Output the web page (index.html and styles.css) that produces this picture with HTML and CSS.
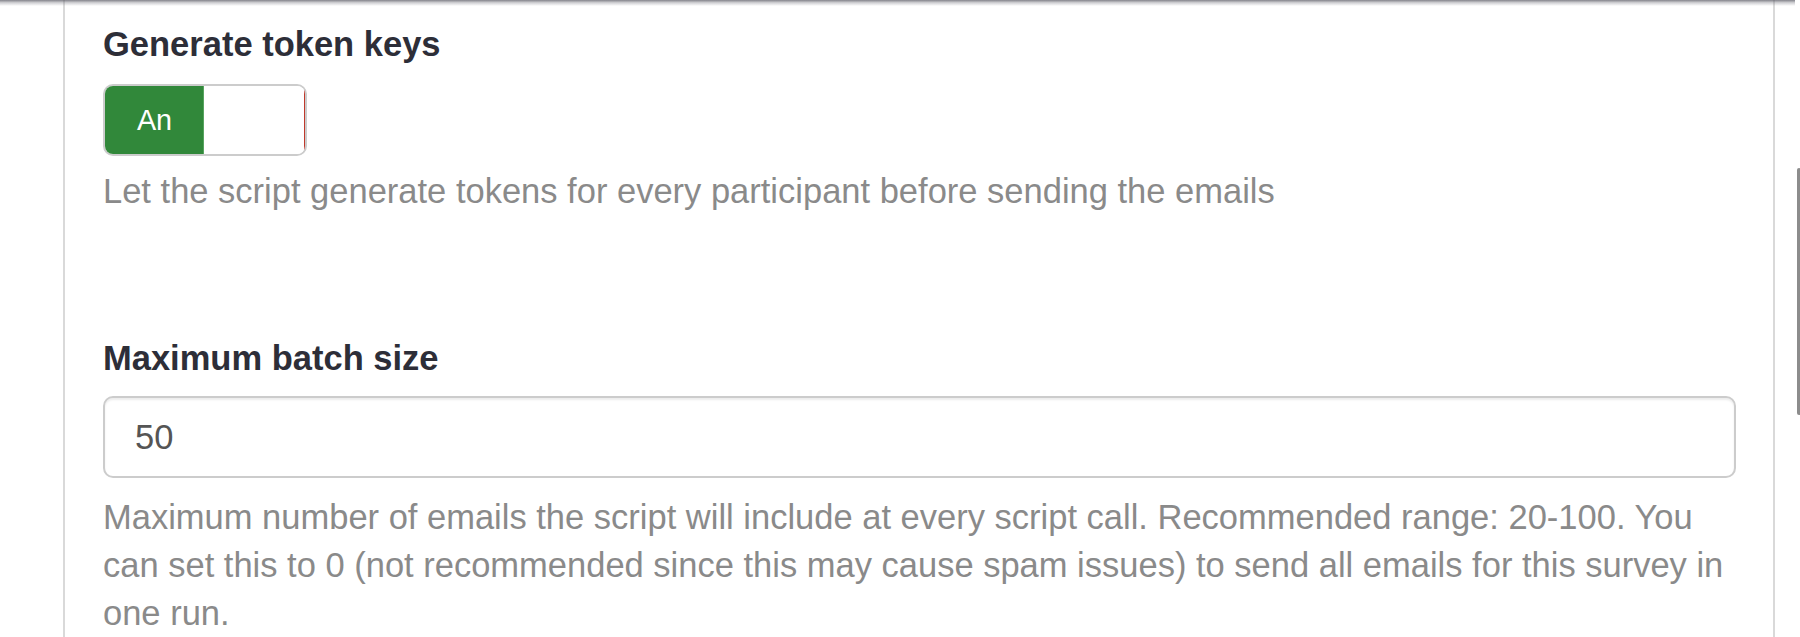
FILE: index.html
```html
<!DOCTYPE html>
<html lang="en">
<head>
<meta charset="utf-8">
<title>Token settings</title>
<link rel="stylesheet" href="styles.css">
</head>
<body>
<div class="top-shadow"></div>
<div class="panel">
  <div class="form-group">
    <div class="field-label">Generate token keys</div>
    <div class="switch">
      <span class="switch-on">An</span>
      <span class="switch-mid"></span>
      <span class="switch-off"></span>
    </div>
    <p class="help help-first">Let the script generate tokens for every participant before sending the emails</p>
  </div>
  <div class="form-group">
    <div class="field-label field-label-second">Maximum batch size</div>
    <div class="text-input">50</div>
    <p class="help help-second">Maximum number of emails the script will include at every script call. Recommended range: 20-100. You can set this to 0 (not recommended since this may cause spam issues) to send all emails for this survey in one run.</p>
  </div>
</div>
<div class="scroll-thumb"></div>
</body>
</html>
```

FILE: styles.css
```css
html, body {
  margin: 0;
  padding: 0;
  background: #ffffff;
}

body {
  width: 1800px;
  height: 637px;
  overflow: hidden;
  position: relative;
  font-family: "Liberation Sans", Arial, Helvetica, sans-serif;
  font-size: 34.5px;
  line-height: 48px;
}

.top-shadow {
  position: absolute;
  top: 0;
  left: 0;
  width: 1795px;
  height: 6px;
  background: linear-gradient(to bottom, rgba(90, 90, 100, 0.75) 0%, rgba(120, 120, 130, 0.35) 45%, rgba(255, 255, 255, 0) 100%);
}

.panel {
  margin-left: 63px;
  width: 1712px;
  height: 637px;
  box-sizing: border-box;
  border-left: 2px solid #d9d9d9;
  border-right: 2px solid #d9d9d9;
  padding: 20px 37px 0 38px;
}

.form-group {
  display: flex;
  flex-direction: column;
  align-items: flex-start;
}

.field-label {
  font-weight: bold;
  color: #2d2e38;
  height: 48px;
}

.field-label-second {
  margin-top: 119px;
}

.switch {
  margin-top: 16px;
  width: 204px;
  height: 72px;
  box-sizing: border-box;
  border: 2px solid #cccccc;
  border-radius: 10px;
  overflow: hidden;
  display: flex;
}

.switch-on {
  width: 99px;
  flex: none;
  background: #31883a;
  box-shadow: inset -1px 0 0 #58a45f;
  color: #ffffff;
  font-size: 28.8px;
  display: flex;
  align-items: center;
  justify-content: center;
}

.switch-mid {
  width: 100px;
  flex: none;
  background: #ffffff;
}

.switch-off {
  width: 1px;
  flex: none;
  background: #c0392b;
}

.help {
  margin: 0;
  color: #8a8a8a;
  align-self: stretch;
}

.help-first {
  margin-top: 11px;
}

.help-second {
  margin-top: 15px;
}

.text-input {
  margin-top: 14px;
  align-self: stretch;
  height: 82px;
  box-sizing: border-box;
  border: 2px solid #cccccc;
  border-radius: 10px;
  box-shadow: inset 0 2px 2px rgba(0, 0, 0, 0.075);
  padding: 0 30px;
  color: #555555;
  display: flex;
  align-items: center;
}

.scroll-thumb {
  position: absolute;
  left: 1797px;
  top: 168px;
  width: 4px;
  height: 247px;
  border-radius: 3px;
  background: #8c8c8c;
}
```
